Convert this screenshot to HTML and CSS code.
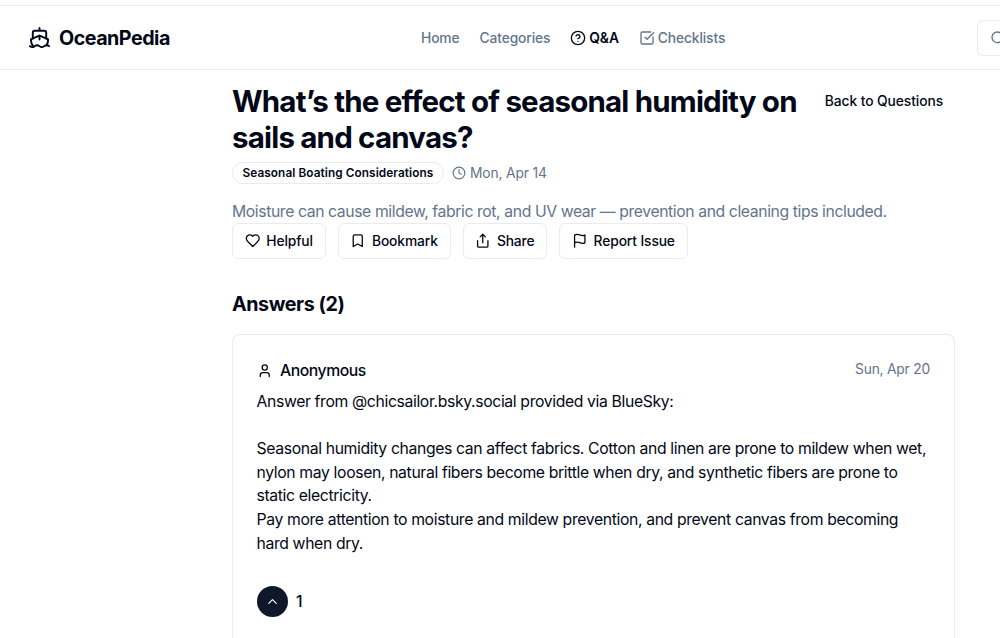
FILE: index.html
```
<!DOCTYPE html>
<html lang="en">
<head>
  <meta charset="UTF-8">
  <title>OceanPedia - Q&amp;A</title>
  <meta name="viewport" content="width=device-width, initial-scale=1.0">
  <link rel="stylesheet" href="styles.css">
</head>

<body>

  <header class="site-header">
    <a class="logo" href="#">
      <svg class="icon" viewBox="0 0 24 24">
        <path d="M12 10.2v4M12 2v3M19 13V7a2 2 0 0 0-2-2H7a2 2 0 0 0-2 2v6"/>
        <path d="M19.4 20A11.6 11.6 0 0 0 21 14l-8.2-3.6a2 2 0 0 0-1.6 0L3 14a11.6 11.6 0 0 0 2.8 7.8"/>
        <path d="M2 21c.6.5 1.2 1 2.5 1 2.5 0 2.5-2 5-2 1.3 0 1.9.5 2.5 1s1.2 1 2.5 1c2.5 0 2.5-2 5-2 1.3 0 1.9.5 2.5 1"/>
      </svg>
      <span>OceanPedia</span>
    </a>

    <nav class="nav">
      <a href="#">Home</a>
      <a href="#">Categories</a>
      <a href="#" class="active">
        <svg class="icon" viewBox="0 0 24 24"><circle cx="12" cy="12" r="10"/><path d="M9.1 9a3 3 0 0 1 5.8 1c0 2-3 3-3 3M12 17h.01"/></svg>
        <span>Q&amp;A</span>
      </a>
      <a href="#">
        <svg class="icon" viewBox="0 0 24 24"><path d="M21 10.5V19a2 2 0 0 1-2 2H5a2 2 0 0 1-2-2V5a2 2 0 0 1 2-2h12.5M9 11l3 3L22 4"/></svg>
        <span>Checklists</span>
      </a>
    </nav>

    <div class="search">
      <svg class="icon" viewBox="0 0 24 24"><circle cx="11" cy="11" r="8"/><path d="m21 21-4.3-4.3"/></svg>
    </div>
  </header>

  <main class="question">
    <div class="question-head">
      <h1>What’s the effect of seasonal humidity on sails and canvas?</h1>
      <a class="back" href="#">Back to Questions</a>
    </div>

    <div class="meta">
      <span class="badge">Seasonal Boating Considerations</span>
      <span class="date">
        <svg class="icon" viewBox="0 0 24 24"><circle cx="12" cy="12" r="10"/><path d="M12 6v6l4 2"/></svg>
        <span>Mon, Apr 14</span>
      </span>
    </div>

    <p class="summary">Moisture can cause mildew, fabric rot, and UV wear — prevention and cleaning tips included.</p>

    <div class="actions">
      <button class="btn">
        <svg class="icon" viewBox="0 0 24 24"><path d="M19 14c1.5-1.5 3-3.2 3-5.5A5.5 5.5 0 0 0 16.5 3c-1.8 0-3 .5-4.5 2-1.5-1.5-2.7-2-4.5-2A5.5 5.5 0 0 0 2 8.5c0 2.3 1.5 4 3 5.5l7 7Z"/></svg>
        <span>Helpful</span>
      </button>
      <button class="btn">
        <svg class="icon" viewBox="0 0 24 24"><path d="m19 21-7-4-7 4V5a2 2 0 0 1 2-2h10a2 2 0 0 1 2 2Z"/></svg>
        <span>Bookmark</span>
      </button>
      <button class="btn">
        <svg class="icon" viewBox="0 0 24 24"><path d="M4 12v8a2 2 0 0 0 2 2h12a2 2 0 0 0 2-2v-8M16 6l-4-4-4 4M12 2v13"/></svg>
        <span>Share</span>
      </button>
      <button class="btn">
        <svg class="icon" viewBox="0 0 24 24"><path d="M4 15s1-1 4-1 5 2 8 2 4-1 4-1V3s-1 1-4 1-5-2-8-2-4 1-4 1ZM4 22v-7"/></svg>
        <span>Report Issue</span>
      </button>
    </div>

    <h2>Answers (2)</h2>

    <article class="answer">
      <div class="answer-head">
        <div class="author">
          <svg class="icon" viewBox="0 0 24 24"><circle cx="12" cy="7" r="4"/><path d="M19 21v-2a4 4 0 0 0-4-4H9a4 4 0 0 0-4 4v2"/></svg>
          <span>Anonymous</span>
        </div>
        <span class="answer-date">Sun, Apr 20</span>
      </div>

      <div class="answer-body">
        <p>Answer from @chicsailor.bsky.social provided via BlueSky:</p>
        <p>Seasonal humidity changes can affect fabrics. Cotton and linen are prone to mildew when wet, nylon may loosen, natural fibers become brittle when dry, and synthetic fibers are prone to static electricity.<br>
        Pay more attention to moisture and mildew prevention, and prevent canvas from becoming hard when dry.</p>
      </div>

      <div class="votes">
        <button class="vote-up">
          <svg class="icon" viewBox="0 0 24 24"><path d="m18 15-6-6-6 6"/></svg>
        </button>
        <span>1</span>
      </div>
    </article>
  </main>

</body>
</html>
```
FILE: styles.css
```
* {
  box-sizing: border-box;
}

html, body {
  margin: 0;
  padding: 0;
  height: 638px;
  background: #fff;
  color: #020817;
  font-family: Inter, "Liberation Sans", sans-serif;
  overflow: hidden;
}

body {
  display: flex;
  flex-direction: column;
}

h1, h2, p {
  margin: 0;
}

a {
  color: inherit;
  text-decoration: none;
}

.icon {
  flex: none;
  width: 16px;
  height: 16px;
  fill: none;
  stroke: currentColor;
  stroke-width: 2;
  stroke-linecap: round;
  stroke-linejoin: round;
}

.site-header {
  display: flex;
  flex: none;
  align-items: center;
  height: 65px;
  margin-top: 5px;
  padding-left: 28px;
  border-top: 1px solid #ededef;
  border-bottom: 1px solid #ededef;
  overflow: hidden;
}

.logo {
  display: flex;
  flex: none;
  align-items: center;
  gap: 8px;
  width: 393px;
  font-size: 19.7px;
  font-weight: 700;
  letter-spacing: -0.5px;
}

.logo .icon {
  width: 23px;
  height: 23px;
}

.nav {
  display: flex;
  flex: none;
  gap: 20px;
  width: 556px;
  font-size: 13.8px;
  font-weight: 500;
  letter-spacing: -0.12px;
  color: #64748b;
}

.nav a {
  display: flex;
  align-items: center;
  gap: 3px;
}

.nav .active {
  color: #020817;
  font-weight: 600;
}

/* runs on to the edge of the window */
.search {
  display: flex;
  flex: 1;
  align-items: center;
  height: 36px;
  padding-left: 12px;
  border: 1px solid #e8ebf0;
  border-right: none;
  border-radius: 6px 0 0 6px;
  color: #64748b;
  overflow: hidden;
}

.question {
  flex: 1;
  display: flex;
  flex-direction: column;
  min-height: 0;
  width: 723px;
  margin-left: 232px;
  padding-top: 14px;
}

.question-head {
  display: flex;
  align-items: flex-start;
  justify-content: space-between;
}

h1 {
  width: 575px;
  font-size: 29.5px;
  line-height: 35.5px;
  font-weight: 700;
  letter-spacing: -0.81px;
}

.back {
  padding: 8px 12px 0 0;
  font-size: 13.8px;
  line-height: 18px;
  font-weight: 500;
  letter-spacing: -0.08px;
}

.meta {
  display: flex;
  align-items: center;
  gap: 8px;
  margin-top: 7px;
}

.badge {
  height: 22px;
  padding: 0 9.5px;
  border: 1px solid #e8ebf0;
  border-radius: 11px;
  font-size: 11.8px;
  line-height: 21px;
  font-weight: 600;
  letter-spacing: 0.08px;
}

.date {
  display: flex;
  align-items: center;
  gap: 4px;
  font-size: 13.8px;
  letter-spacing: -0.12px;
  color: #64748b;
}

.date .icon {
  width: 14px;
  height: 14px;
}

.summary {
  margin-top: 16px;
  font-size: 15.75px;
  line-height: 23.5px;
  letter-spacing: -0.4px;
  color: #64748b;
  white-space: nowrap;
}

.actions {
  display: flex;
  gap: 12px;
  margin-top: -1px;
}

.btn {
  display: flex;
  align-items: center;
  gap: 6px;
  height: 36px;
  padding: 0 11.8px;
  border: 1px solid #e8ebf0;
  border-radius: 6px;
  background: #fff;
  color: #020817;
  font-family: inherit;
  font-size: 13.8px;
  font-weight: 500;
  letter-spacing: -0.12px;
}

.btn .icon {
  width: 15.5px;
  height: 15.5px;
}

h2 {
  margin-top: 31px;
  font-size: 19.7px;
  line-height: 28px;
  font-weight: 650;
  letter-spacing: -0.42px;
}

.answer {
  flex: 1;
  min-height: 0;
  margin-top: 16px;
  padding: 24px 24px 0 23.5px;
  border: 1px solid #e8ebf0;
  border-bottom: none;
  border-radius: 8px 8px 0 0;
}

.answer-head {
  display: flex;
  justify-content: space-between;
}

.author {
  display: flex;
  align-items: center;
  gap: 8px;
  font-size: 15.75px;
  line-height: 24px;
  font-weight: 500;
  letter-spacing: -0.45px;
}

.author .icon {
  width: 15.5px;
  height: 15.5px;
}

.answer-date {
  font-size: 13.8px;
  line-height: 20px;
  letter-spacing: -0.2px;
  color: #64748b;
}

.answer-body {
  margin-top: 7.5px;
  font-size: 15.75px;
  line-height: 23.6px;
  letter-spacing: -0.36px;
}

.answer-body p + p {
  margin-top: 23.6px;
}

.votes {
  display: flex;
  align-items: center;
  gap: 8px;
  margin-top: 30.5px;
  font-size: 15.75px;
  font-weight: 500;
}

.vote-up {
  display: flex;
  align-items: center;
  justify-content: center;
  width: 31.5px;
  height: 31.5px;
  padding: 0;
  border: none;
  border-radius: 50%;
  background: #0f172a;
  color: #f8fafc;
}

.vote-up .icon {
  width: 15px;
  height: 15px;
}
```
